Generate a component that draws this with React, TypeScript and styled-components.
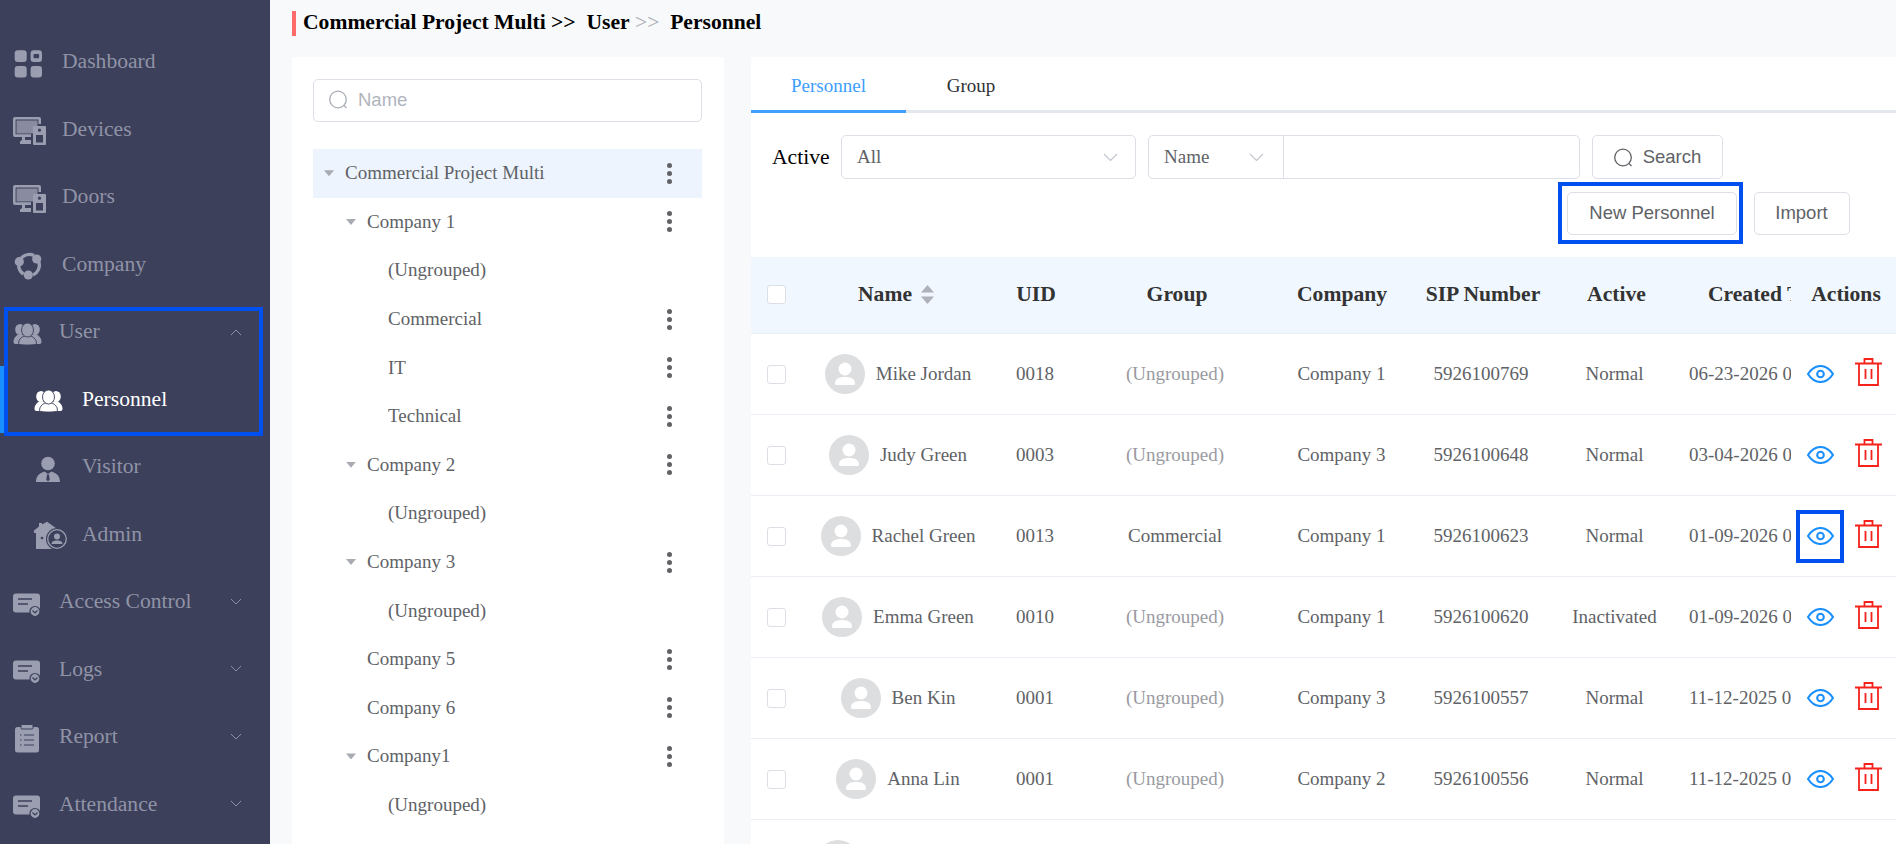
import React from "react";
import styled, { createGlobalStyle } from "styled-components";

const SERIF = `"Liberation Serif", "Times New Roman", serif`;
const SANS = `"Liberation Sans", Arial, sans-serif`;
const NAVBG = "#3c405b";
const NAVFG = "#9a9eb0";
const MARK = "#0050ef";

const Global = createGlobalStyle`
  html, body { margin: 0; padding: 0; height: 100%; overflow: hidden; background: #f7f9fb; }
  * { box-sizing: border-box; }
  #root { height: 100%; }
`;

const Page = styled.div`
  display: flex;
  width: 1896px;
  height: 844px;
  overflow: hidden;
  font-family: ${SERIF};
`;

/* ---------- sidebar ---------- */
const Sidebar = styled.nav`
  width: 270px;
  flex: none;
  background: ${NAVBG};
  padding-top: 28px;
`;
const NavRow = styled.div<{ $level?: number; $active?: boolean; $tight?: boolean }>`
  position: relative;
  height: 67.5px;
  display: flex;
  align-items: center;
  padding-left: ${(p) => (p.$level === 2 ? 34 : 13)}px;
  padding-right: 28px;
  gap: ${(p) => (p.$level === 2 ? 15 : p.$tight ? 13 : 16)}px;
  font-size: 21.6px;
  color: ${(p) => (p.$active ? "#ffffff" : "#9093a6")};
  &::before {
    content: "";
    display: ${(p) => (p.$active ? "block" : "none")};
    position: absolute;
    left: 0;
    top: 0;
    bottom: 0;
    width: 4px;
    background: #1890ff;
  }
`;
const NavIcon = styled.svg<{ $active?: boolean }>`
  width: 33px;
  height: 34px;
  flex: none;
  color: ${(p) => (p.$active ? "#ffffff" : NAVFG)};
`;
const NavLabel = styled.span`
  flex: 1;
  white-space: nowrap;
`;
const NavChevron = styled.svg`
  width: 12px;
  height: 8px;
  flex: none;
  color: #8d90a4;
`;
const NavGroup = styled.div`
  position: relative;
  &::after {
    content: "";
    position: absolute;
    left: 4px;
    right: 7px;
    top: 9px;
    bottom: -3px;
    border: 4px solid ${MARK};
    pointer-events: none;
  }
`;

const DashboardIcon = () => (
  <NavIcon viewBox="0 0 33 34" fill="currentColor">
    <rect x="1.7" y="5.3" width="12" height="11.6" rx="3" />
    <path fillRule="evenodd" d="M20.6 5.3h5.4a3 3 0 0 1 3 3v5.6a3 3 0 0 1-3 3h-5.4a3 3 0 0 1-3-3V8.3a3 3 0 0 1 3-3zm.7 3.6a.8.8 0 0 0-.8.8v2.8a.8.8 0 0 0 .8.8h4a.8.8 0 0 0 .8-.8V9.7a.8.8 0 0 0-.8-.8z" />
    <rect x="1.7" y="21" width="12" height="11.6" rx="3" />
    <rect x="17.6" y="21" width="11.4" height="11.6" rx="3" />
  </NavIcon>
);
const DeviceIcon = () => (
  <NavIcon viewBox="0 0 33 34" fill="currentColor">
    <path fillRule="evenodd" d="M2 5h24a2 2 0 0 1 2 2v5h-2.6V7.6H2.6v14.6H18V25H12v3h6v4H7v-2.6l2-1.4v-3H2a2 2 0 0 1-2-2V7a2 2 0 0 1 2-2z" />
    <rect x="3.5" y="8.5" width="21" height="13" fill="currentColor" opacity="0.82" />
    <path fillRule="evenodd" d="M21 14h11a1 1 0 0 1 1 1v17a1 1 0 0 1-1 1H21a1 1 0 0 1-1-1V15a1 1 0 0 1 1-1zm5.5 2.6a1.6 1.6 0 1 0 0 3.2 1.6 1.6 0 0 0 0-3.2zM23 23v7.4h7V23z" />
  </NavIcon>
);
const CompanyIcon = () => (
  <NavIcon viewBox="0 0 33 34" fill="currentColor">
    <path d="M8 11.5a11 11 0 0 1 13-3" fill="none" stroke="currentColor" strokeWidth="3.4" />
    <path d="M5.6 19a11 11 0 0 0 5 8" fill="none" stroke="currentColor" strokeWidth="3.4" />
    <path d="M20 28a11 11 0 0 0 6-13" fill="none" stroke="currentColor" strokeWidth="3.4" />
    <circle cx="23.7" cy="12" r="4.6" />
    <circle cx="6.3" cy="14.7" r="4.6" />
    <circle cx="15.3" cy="28" r="4.6" />
  </NavIcon>
);
const PeopleIcon = ({ active }: { active?: boolean }) => (
  <NavIcon $active={active} viewBox="0 0 33 34" fill="currentColor">
    <ellipse cx="7" cy="14.5" rx="4.800" ry="5.500" />
    <ellipse cx="22" cy="14.5" rx="4.800" ry="5.500" />
    <path d="M0.5 27c0-4 2.500-6 4.500-7.500h4c3 0 4 3 4 9.500H2.500a2 2 0 0 1-2-2z" />
    <path d="M28.500 27c0-4-2.500-6-4.500-7.500h-4c-3 0-4 3-4 9.500h10.500a2 2 0 0 0 2-2z" />
    <path d="M5.500 28.500c0-4 2.500-6 5.500-7.500h7c3 1.500 5.500 3.500 5.500 7.500 0 1-4 1.500-9 1.500s-9-.5-9-1.500z" stroke={NAVBG} strokeWidth="0.9" />
    <ellipse cx="14.500" cy="15" rx="6" ry="7" stroke={NAVBG} strokeWidth="0.9" />
  </NavIcon>
);
const VisitorIcon = () => (
  <NavIcon viewBox="0 0 33 34" fill="currentColor">
    <circle cx="14" cy="13.500" r="6.800" />
    <path d="M2 32c0-6 3.500-9 8.500-10.500L14 24l3.500-2.500C22.500 23 26 26 26 32z" />
    <path d="M13 24.500h2l.7 5-1.700 2-1.700-2z" fill={NAVBG} />
  </NavIcon>
);
const AdminIcon = () => (
  <NavIcon viewBox="0 0 33 34" fill="currentColor">
    <path d="M13 4.700L26 14v18H2V16H0v-2.500L5 9.500V6h3v1.500z" />
    <circle cx="8" cy="21" r="1.300" fill={NAVBG} />
    <circle cx="23" cy="22" r="11" fill={NAVBG} />
    <circle cx="23" cy="22" r="9.300" fill="none" stroke="currentColor" strokeWidth="1.300" />
    <circle cx="23" cy="19.500" r="3" />
    <path d="M17.500 27c0-2.500 2.500-3.500 5.500-3.500s5.500 1 5.500 3.500z" />
  </NavIcon>
);
const CardIcon = () => (
  <NavIcon viewBox="0 0 33 34" fill="currentColor">
    <rect x="0" y="8.500" width="27" height="19" rx="3" />
    <path d="M5 14h14M5 19h10" stroke={NAVBG} strokeWidth="1.500" />
    <circle cx="22" cy="26.500" r="5" fill="currentColor" stroke={NAVBG} strokeWidth="1.200" />
    <path d="M19.500 25.500l2.500 2.500 2.500-2.500" fill="none" stroke={NAVBG} strokeWidth="1.200" />
  </NavIcon>
);
const ReportIcon = () => (
  <NavIcon viewBox="0 0 33 34" fill="currentColor">
    <rect x="2" y="7" width="24" height="25.500" rx="2.500" />
    <rect x="8" y="4.500" width="12" height="4.500" rx="1" stroke={NAVBG} strokeWidth="1" />
    <path d="M7 15h1.500M11 15h10M7 20h1.500M11 20h10M7 25h1.500M11 25h10" stroke={NAVBG} strokeWidth="1.200" />
  </NavIcon>
);
const Chevron = ({ up }: { up?: boolean }) => (
  <NavChevron viewBox="0 0 12 8" fill="none" stroke="currentColor" strokeWidth="1">
    <path d={up ? "M1 7l5-5 5 5" : "M1 1l5 5 5-5"} />
  </NavChevron>
);

/* ---------- main ---------- */
const Main = styled.main`
  flex: 1;
  min-width: 0;
  display: flex;
  flex-direction: column;
  padding-left: 22px;
  background: #f7f9fb;
`;
const Crumbs = styled.div`
  height: 57px;
  flex: none;
  padding-top: 11px;
  display: flex;
  align-items: flex-start;
  font-size: 21.6px;
  font-weight: 700;
  color: #000;
  white-space: pre;
  line-height: 23px;
  &::before {
    content: "";
    width: 4px;
    height: 25px;
    background: #ff6b6b;
    margin-right: 7px;
  }
`;
const CrumbSep = styled.span`
  font-weight: 400;
  color: #a8abb2;
`;
const Body = styled.div`
  flex: 1;
  min-height: 0;
  display: flex;
  gap: 27px;
`;

/* tree panel */
const TreePanel = styled.aside`
  width: 432px;
  flex: none;
  background: #fff;
  padding: 22px 22px 0 21px;
  overflow: hidden;
`;
const SearchBox = styled.div`
  height: 43px;
  border: 1px solid #dcdfe6;
  border-radius: 5px;
  display: flex;
  align-items: center;
  gap: 10px;
  padding-left: 15px;
  padding-bottom: 2px;
  margin-bottom: 27px;
  font-family: ${SANS};
  font-size: 18.500px;
  color: #b0b4bd;
`;
const SearchGlyph = styled.svg`
  width: 19px;
  height: 19px;
  flex: none;
`;
const TreeRow = styled.div<{ $level: number; $selected?: boolean }>`
  height: 48.600px;
  display: flex;
  align-items: center;
  padding-left: ${(p) => (p.$level === 2 ? 54 : 11 + p.$level * 22)}px;
  padding-right: 30px;
  font-size: 19px;
  color: #606266;
  background: ${(p) => (p.$selected ? "#edf4fe" : "transparent")};
`;
const TreeCaret = styled.span<{ $hidden?: boolean }>`
  width: 10px;
  height: 6px;
  margin-right: 11px;
  flex: none;
  visibility: ${(p) => (p.$hidden ? "hidden" : "visible")};
  background: #a8abb2;
  clip-path: polygon(0 0, 100% 0, 50% 100%);
`;
const TreeLabel = styled.span`
  flex: 1;
`;
const TreeDots = styled.span`
  display: flex;
  flex-direction: column;
  gap: 3px;
  width: 5px;
  flex: none;
  i {
    display: block;
    width: 5px;
    height: 5px;
    border-radius: 50%;
    background: #606266;
  }
`;

/* content panel */
const Content = styled.section`
  flex: 1;
  min-width: 0;
  background: #fff;
  overflow: hidden;
`;
const Tabs = styled.div`
  height: 56px;
  display: flex;
  border-bottom: 3px solid #e4e7ed;
`;
const Tab = styled.div<{ $active?: boolean; $w: number }>`
  width: ${(p) => p.$w}px;
  height: 56px;
  flex: none;
  display: flex;
  align-items: center;
  justify-content: center;
  padding-top: 4px;
  font-size: 19px;
  color: ${(p) => (p.$active ? "#409eff" : "#303133")};
  border-bottom: 3px solid ${(p) => (p.$active ? "#409eff" : "transparent")};
`;
const FilterRow = styled.div`
  display: flex;
  align-items: center;
  height: 44px;
  margin-top: 22px;
  padding-left: 21px;
`;
const FilterLabel = styled.span`
  font-size: 21.600px;
  color: #000;
  width: 69px;
  flex: none;
`;
const Select = styled.div<{ $w: number }>`
  width: ${(p) => p.$w}px;
  height: 44px;
  flex: none;
  border: 1px solid #dcdfe6;
  border-radius: 5px;
  display: flex;
  align-items: center;
  justify-content: space-between;
  padding: 0 17px 0 15px;
  font-size: 19px;
  color: #606266;
`;
const CombinedField = styled.div`
  display: flex;
  margin-left: 12px;
  flex: none;
  width: 432px;
  height: 44px;
  border: 1px solid #dcdfe6;
  border-radius: 5px;
`;
const ComboSelect = styled.div`
  width: 135px;
  flex: none;
  border-right: 1px solid #dcdfe6;
  display: flex;
  align-items: center;
  justify-content: space-between;
  padding: 0 19px 0 15px;
  font-size: 19px;
  color: #606266;
`;
const SelectChevron = styled.svg`
  width: 15px;
  height: 9px;
  flex: none;
  color: #c0c4cc;
`;
const Button = styled.div<{ $w: number; $h?: number; $lift?: boolean }>`
  position: relative;
  width: ${(p) => p.$w}px;
  height: ${(p) => p.$h ?? 43}px;
  flex: none;
  border: 1px solid #dcdfe6;
  border-radius: 5px;
  display: flex;
  align-items: center;
  justify-content: center;
  gap: 10px;
  padding-bottom: ${(p) => (p.$lift ? 2 : 0)}px;
  font-family: ${SANS};
  font-size: 18.500px;
  color: #606266;
  background: #fff;
`;
const SearchButton = styled(Button)`
  margin-left: 12px;
`;
const ButtonRow = styled.div`
  display: flex;
  justify-content: flex-end;
  gap: 16.500px;
  margin-top: 13px;
  padding-right: 46.500px;
`;
const MarkedButton = styled(Button)`
  &::after {
    content: "";
    position: absolute;
    left: -10px;
    right: -6.500px;
    top: -11px;
    bottom: -10px;
    border: 4px solid ${MARK};
    pointer-events: none;
  }
`;

/* table */
const Table = styled.table`
  width: 1145px;
  table-layout: fixed;
  border-collapse: separate;
  border-spacing: 0;
  margin-top: 22px;
`;
const HeadCell = styled.th<{ $clip?: boolean; $pad?: number }>`
  height: 77px;
  padding: 0 0 2px ${(p) => p.$pad ?? 0}px;
  background: #f0f7ff;
  border-bottom: 1px solid #ebeef5;
  font-size: 21.600px;
  font-weight: 700;
  color: #333;
  text-align: ${(p) => (p.$clip ? "left" : "center")};
  white-space: nowrap;
  overflow: hidden;
`;
const Cell = styled.td<{ $muted?: boolean; $clip?: boolean; $pad?: number; $nudge?: number }>`
  height: 81px;
  padding: 0 ${(p) => p.$nudge ?? 0}px 0 ${(p) => p.$pad ?? 0}px;
  border-bottom: 1px solid #ebeef5;
  font-size: 19px;
  color: ${(p) => (p.$muted ? "#999a9f" : "#606266")};
  text-align: ${(p) => (p.$clip ? "left" : "center")};
  white-space: nowrap;
  overflow: hidden;
`;
const Check = styled.span`
  display: block;
  width: 19px;
  height: 19px;
  margin-left: 16px;
  background: #fff;
  border: 1px solid #dcdfe6;
  border-radius: 3px;
`;
const NameWrap = styled.div`
  display: flex;
  align-items: center;
  justify-content: center;
  gap: 11px;
`;
const HeadName = styled.div`
  display: flex;
  align-items: center;
  justify-content: center;
  gap: 9px;
  padding-right: 4px;
`;
const SortGlyph = styled.svg`
  width: 13px;
  height: 19px;
  flex: none;
  color: #aeb1b9;
`;
const Avatar = styled.svg`
  width: 40px;
  height: 40px;
  flex: none;
`;
const ActionBox = styled.div`
  display: flex;
  align-items: center;
  gap: 21px;
  padding-left: 15.500px;
`;
const EyeWrap = styled.span<{ $marked?: boolean }>`
  position: relative;
  display: flex;
  width: 27px;
  height: 18px;
  flex: none;
  &::after {
    content: "";
    display: ${(p) => (p.$marked ? "block" : "none")};
    position: absolute;
    left: -10.500px;
    right: -10.500px;
    top: -17.500px;
    bottom: -17.500px;
    border: 4px solid ${MARK};
    pointer-events: none;
  }
`;
const EyeGlyph = styled.svg`
  width: 27px;
  height: 18px;
`;
const TrashGlyph = styled.svg`
  width: 27px;
  height: 28px;
  flex: none;
  margin-top: -5px;
`;

const Search = ({ color }: { color: string }) => (
  <SearchGlyph viewBox="0 0 19 19" fill="none" stroke={color} strokeWidth="1.300">
    <circle cx="9" cy="9.500" r="8.300" />
    <path d="M15 15.500l2.500 2.500" />
  </SearchGlyph>
);
const DownChevron = () => (
  <SelectChevron viewBox="0 0 15 9" fill="none" stroke="currentColor" strokeWidth="1.100">
    <path d="M1 1l6.500 6.500L14 1" />
  </SelectChevron>
);
const Eye = () => (
  <EyeGlyph viewBox="0 0 27 18" fill="none" stroke="#1a90ff" strokeWidth="2.100">
    <path d="M1 9C4.500 3.600 8.500 1 13.500 1S22.500 3.600 26 9c-3.500 5.400-7.500 8-12.500 8S4.500 14.400 1 9z" />
    <circle cx="13.500" cy="9" r="3.300" />
  </EyeGlyph>
);
const Trash = () => (
  <TrashGlyph viewBox="0 0 27 28" fill="none" stroke="#f5221b" strokeWidth="1.800">
    <path d="M0 5.500h27M4 5.500V27h19V5.500M9.500 5.500V1h8v4.500" />
    <path d="M10.500 11v10M16.500 11v10" />
  </TrashGlyph>
);
const Person = () => (
  <Avatar viewBox="0 0 40 40">
    <circle cx="20" cy="20" r="20" fill="#dddee0" />
    <circle cx="20" cy="15" r="6.500" fill="#fff" />
    <path d="M10 29.500c0-4.500 4-6.500 10-6.500s10 2 10 6.500a1.500 1.500 0 0 1-1.500 1.500h-17a1.500 1.500 0 0 1-1.500-1.500z" fill="#fff" />
  </Avatar>
);

const tree: { t: string; l: number; caret?: boolean; dots?: boolean; sel?: boolean }[] = [
  { t: "Commercial Project Multi", l: 0, caret: true, dots: true, sel: true },
  { t: "Company 1", l: 1, caret: true, dots: true },
  { t: "(Ungrouped)", l: 2 },
  { t: "Commercial", l: 2, dots: true },
  { t: "IT", l: 2, dots: true },
  { t: "Technical", l: 2, dots: true },
  { t: "Company 2", l: 1, caret: true, dots: true },
  { t: "(Ungrouped)", l: 2 },
  { t: "Company 3", l: 1, caret: true, dots: true },
  { t: "(Ungrouped)", l: 2 },
  { t: "Company 5", l: 1, dots: true },
  { t: "Company 6", l: 1, dots: true },
  { t: "Company1", l: 1, caret: true, dots: true },
  { t: "(Ungrouped)", l: 2 },
];

const rows = [
  ["Mike Jordan", "0018", "(Ungrouped)", "Company 1", "5926100769", "Normal", "06-23-2026 09:12:41"],
  ["Judy Green", "0003", "(Ungrouped)", "Company 3", "5926100648", "Normal", "03-04-2026 09:40:18"],
  ["Rachel Green", "0013", "Commercial", "Company 1", "5926100623", "Normal", "01-09-2026 09:22:05"],
  ["Emma Green", "0010", "(Ungrouped)", "Company 1", "5926100620", "Inactivated", "01-09-2026 09:20:37"],
  ["Ben Kin", "0001", "(Ungrouped)", "Company 3", "5926100557", "Normal", "11-12-2025 09:31:52"],
  ["Anna Lin", "0001", "(Ungrouped)", "Company 2", "5926100556", "Normal", "11-12-2025 09:30:14"],
  ["Jessica Brown", "0001", "(Ungrouped)", "Company 2", "5926100555", "Normal", "11-12-2025 09:28:03"],
];

const widths = [55, 184, 92, 190, 140, 142, 125, 112, 105];

export default function App() {
  return (
    <Page>
      <Global />
      <Sidebar>
        <NavRow><DashboardIcon /><NavLabel>Dashboard</NavLabel></NavRow>
        <NavRow><DeviceIcon /><NavLabel>Devices</NavLabel></NavRow>
        <NavRow><DeviceIcon /><NavLabel>Doors</NavLabel></NavRow>
        <NavRow><CompanyIcon /><NavLabel>Company</NavLabel></NavRow>
        <NavGroup>
          <NavRow $tight><PeopleIcon /><NavLabel>User</NavLabel><Chevron up /></NavRow>
          <NavRow $level={2} $active><PeopleIcon active /><NavLabel>Personnel</NavLabel></NavRow>
        </NavGroup>
        <NavRow $level={2}><VisitorIcon /><NavLabel>Visitor</NavLabel></NavRow>
        <NavRow $level={2}><AdminIcon /><NavLabel>Admin</NavLabel></NavRow>
        <NavRow $tight><CardIcon /><NavLabel>Access Control</NavLabel><Chevron /></NavRow>
        <NavRow $tight><CardIcon /><NavLabel>Logs</NavLabel><Chevron /></NavRow>
        <NavRow $tight><ReportIcon /><NavLabel>Report</NavLabel><Chevron /></NavRow>
        <NavRow $tight><CardIcon /><NavLabel>Attendance</NavLabel><Chevron /></NavRow>
      </Sidebar>
      <Main>
        <Crumbs>
          Commercial Project Multi &gt;&gt;  User<CrumbSep> &gt;&gt;  </CrumbSep>Personnel
        </Crumbs>
        <Body>
          <TreePanel>
            <SearchBox><Search color="#a9adb6" />Name</SearchBox>
            {tree.map((n, i) => (
              <TreeRow key={i} $level={n.l} $selected={n.sel}>
                {n.l < 2 && <TreeCaret $hidden={!n.caret} />}
                {n.l === 2 && <TreeCaret $hidden />}
                <TreeLabel>{n.t}</TreeLabel>
                {n.dots && <TreeDots><i /><i /><i /></TreeDots>}
              </TreeRow>
            ))}
          </TreePanel>
          <Content>
            <Tabs>
              <Tab $active $w={155}>Personnel</Tab>
              <Tab $w={130}>Group</Tab>
            </Tabs>
            <FilterRow>
              <FilterLabel>Active</FilterLabel>
              <Select $w={295}>All<DownChevron /></Select>
              <CombinedField>
                <ComboSelect>Name<DownChevron /></ComboSelect>
              </CombinedField>
              <SearchButton $w={131} $h={44}><Search color="#606266" />Search</SearchButton>
            </FilterRow>
            <ButtonRow>
              <MarkedButton $w={170} $lift>New Personnel</MarkedButton>
              <Button $w={96} $lift>Import</Button>
            </ButtonRow>
            <Table>
              <colgroup>
                {widths.map((w, i) => <col key={i} width={w} />)}
              </colgroup>
              <thead>
                <tr>
                  <HeadCell><Check /></HeadCell>
                  <HeadCell>
                    <HeadName>
                      Name
                      <SortGlyph viewBox="0 0 13 19" fill="currentColor">
                        <path d="M6.500 0L13 7.500H0zM0 11.500h13L6.500 19z" />
                      </SortGlyph>
                    </HeadName>
                  </HeadCell>
                  <HeadCell>UID</HeadCell>
                  <HeadCell>Group</HeadCell>
                  <HeadCell>Company</HeadCell>
                  <HeadCell>SIP Number</HeadCell>
                  <HeadCell>Active</HeadCell>
                  <HeadCell $clip $pad={29}>Created Time</HeadCell>
                  <HeadCell $pad={5}>Actions</HeadCell>
                </tr>
              </thead>
              <tbody>
                {rows.map((r, i) => (
                  <tr key={i}>
                    <Cell><Check /></Cell>
                    <Cell><NameWrap><Person />{r[0]}</NameWrap></Cell>
                    <Cell $nudge={2}>{r[1]}</Cell>
                    <Cell $muted={r[2] === "(Ungrouped)"} $nudge={4}>{r[2]}</Cell>
                    <Cell $nudge={1}>{r[3]}</Cell>
                    <Cell $nudge={4}>{r[4]}</Cell>
                    <Cell $nudge={4}>{r[5]}</Cell>
                    <Cell $clip $pad={10}>{r[6]}</Cell>
                    <Cell>
                      <ActionBox>
                        <EyeWrap $marked={i === 2}><Eye /></EyeWrap>
                        <Trash />
                      </ActionBox>
                    </Cell>
                  </tr>
                ))}
              </tbody>
            </Table>
          </Content>
        </Body>
      </Main>
    </Page>
  );
}
